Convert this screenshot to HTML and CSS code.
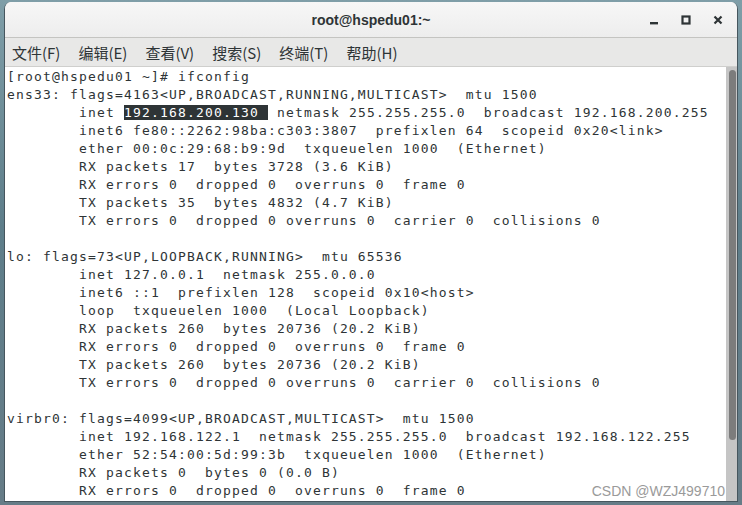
FILE: index.html
```html
<!DOCTYPE html>
<html lang="zh-CN">
<head>
    <meta charset="UTF-8">
    <title>root@hspedu01:~</title>
    <link rel="stylesheet" href="styles.css">
</head>
<body>
    <div class="window">
        <div class="titlebar">
            <span></span>
            <span class="title">root@hspedu01:~</span>
            <div class="controls">
                <svg class="ctl" width="12" height="12" viewBox="0 0 12 12"><rect x="2" y="8" width="8" height="2.4" fill="#2e3436"/></svg>
                <svg class="ctl" width="12" height="12" viewBox="0 0 12 12"><rect x="2.5" y="2.5" width="7" height="7" fill="none" stroke="#2e3436" stroke-width="2.2"/></svg>
                <svg class="ctl" width="12" height="12" viewBox="0 0 12 12"><path d="M2.5 2.5 L9.5 9.5 M9.5 2.5 L2.5 9.5" stroke="#2e3436" stroke-width="2.2"/></svg>
            </div>
        </div>
        <div class="menubar">
            <span class="menu-item">文件(F)</span>
            <span class="menu-item">编辑(E)</span>
            <span class="menu-item">查看(V)</span>
            <span class="menu-item">搜索(S)</span>
            <span class="menu-item">终端(T)</span>
            <span class="menu-item">帮助(H)</span>
        </div>
        <div class="terminal">
            <div class="screen">
                <div class="ln">[root@hspedu01 ~]# ifconfig</div>
                <div class="ln">ens33: flags=4163&lt;UP,BROADCAST,RUNNING,MULTICAST&gt;  mtu 1500</div>
                <div class="ln">        inet <span class="sel">192.168.200.130 </span> netmask 255.255.255.0  broadcast 192.168.200.255</div>
                <div class="ln">        inet6 fe80::2262:98ba:c303:3807  prefixlen 64  scopeid 0x20&lt;link&gt;</div>
                <div class="ln">        ether 00:0c:29:68:b9:9d  txqueuelen 1000  (Ethernet)</div>
                <div class="ln">        RX packets 17  bytes 3728 (3.6 KiB)</div>
                <div class="ln">        RX errors 0  dropped 0  overruns 0  frame 0</div>
                <div class="ln">        TX packets 35  bytes 4832 (4.7 KiB)</div>
                <div class="ln">        TX errors 0  dropped 0 overruns 0  carrier 0  collisions 0</div>
                <div class="ln"> </div>
                <div class="ln">lo: flags=73&lt;UP,LOOPBACK,RUNNING&gt;  mtu 65536</div>
                <div class="ln">        inet 127.0.0.1  netmask 255.0.0.0</div>
                <div class="ln">        inet6 ::1  prefixlen 128  scopeid 0x10&lt;host&gt;</div>
                <div class="ln">        loop  txqueuelen 1000  (Local Loopback)</div>
                <div class="ln">        RX packets 260  bytes 20736 (20.2 KiB)</div>
                <div class="ln">        RX errors 0  dropped 0  overruns 0  frame 0</div>
                <div class="ln">        TX packets 260  bytes 20736 (20.2 KiB)</div>
                <div class="ln">        TX errors 0  dropped 0 overruns 0  carrier 0  collisions 0</div>
                <div class="ln"> </div>
                <div class="ln">virbr0: flags=4099&lt;UP,BROADCAST,MULTICAST&gt;  mtu 1500</div>
                <div class="ln">        inet 192.168.122.1  netmask 255.255.255.0  broadcast 192.168.122.255</div>
                <div class="ln">        ether 52:54:00:5d:99:3b  txqueuelen 1000  (Ethernet)</div>
                <div class="ln">        RX packets 0  bytes 0 (0.0 B)</div>
                <div class="ln">        RX errors 0  dropped 0  overruns 0  frame 0</div>
            </div>
            <div class="scrollbar">
                <div class="thumb"></div>
            </div>
            <span class="watermark">CSDN @WZJ499710</span>
        </div>
    </div>
</body>
</html>
```

FILE: styles.css
```css
body {
    margin: 0;
    width: 742px;
    height: 505px;
    padding: 2px 4px 4px 4px;
    box-sizing: border-box;
    background: linear-gradient(180deg, #7f9ea8 0%, #5e7e8a 45%, #667c87 100%);
    overflow: hidden;
}
.window {
    height: 499px;
    display: flex;
    flex-direction: column;
    border: 1px solid #46565e;
    border-top: none;
    border-radius: 7px 7px 0 0;
    overflow: hidden;
    background: #ffffff;
}
.titlebar {
    height: 35px;
    flex: none;
    display: grid;
    grid-template-columns: 1fr auto 1fr;
    align-items: center;
    background: linear-gradient(180deg, #f7f7f7 0%, #ededed 100%);
    border-bottom: 1px solid #c4c4c1;
}
.title {
    font-family: "Liberation Sans", Arial, sans-serif;
    font-weight: bold;
    font-size: 14px;
    color: #2e3436;
}
.controls {
    display: flex;
    justify-content: flex-end;
    align-items: center;
    gap: 20px;
    padding-right: 13px;
}
.ctl {
    display: block;
}
.menubar {
    height: 28px;
    flex: none;
    display: flex;
    align-items: center;
    gap: 18px;
    padding-left: 7px;
    background: #e8e8e7;
    border-bottom: 1px solid #cfcfcd;
    font-family: "Noto Sans CJK SC", "Noto Sans", sans-serif;
    font-size: 15px;
    color: #2e3436;
}
.terminal {
    flex: 1;
    display: flex;
    position: relative;
    min-height: 0;
}
.screen {
    flex: 1;
    padding: 1px 0 0 2px;
    font-family: "DejaVu Sans Mono", monospace;
    font-size: 13px;
    letter-spacing: 1.17px;
    line-height: 18px;
    color: #2e3436;
    overflow: hidden;
}
.ln {
    white-space: pre;
    height: 18px;
}
.sel {
    background: #2e3436;
    color: #ffffff;
}
.scrollbar {
    width: 11px;
    flex: none;
    background: #c5c5c5;
    padding: 3px 1px 0 3px;
    box-sizing: border-box;
}
.thumb {
    height: 370px;
    background: #7c7c7c;
    border-radius: 4px;
}
.watermark {
    position: absolute;
    right: 12px;
    bottom: 2px;
    font-family: "Liberation Sans", Arial, sans-serif;
    font-size: 14px;
    color: #9a9a9a;
    text-shadow: 0 0 2px #ffffff;
}
```
